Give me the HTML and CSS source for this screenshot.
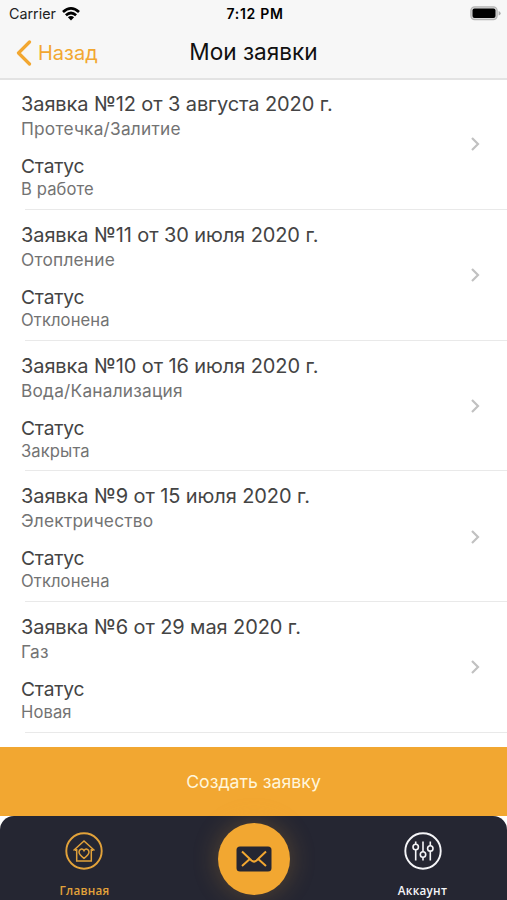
FILE: index.html
```
<!DOCTYPE html>
<html lang="ru">
<head>
<meta charset="utf-8">
<title>Мои заявки</title>
<link rel="stylesheet" href="styles.css">
</head>
<body>
<div class="app">
  <header class="header">
    <div class="status-bar">
      <div class="carrier"><span>Carrier</span>
        <svg class="wifi" width="18" height="14" viewBox="0 0 18 14" fill="none" stroke="#000" stroke-width="2.7"><path d="M1 5.1Q9-2.2 17 5.1"/><path d="M3.9 8.3Q9 3.7 14.1 8.3"/><path d="M9 13.4 5.9 10.2Q9 7.8 12.1 10.2Z" fill="#000" stroke="none"/></svg>
      </div>
      <time class="clock">7:12 PM</time>
      <svg class="battery" width="31" height="15" viewBox="0 0 31 15"><rect x=".9" y=".9" width="26.2" height="12.7" rx="3.8" fill="#d8d8d8" stroke="#b4b4b4" stroke-width="1.3"/><rect x="2.5" y="2.5" width="23" height="9.5" rx="2" fill="#000"/><path d="M28.6 5v4.6q2-.7 2-2.3t-2-2.3" fill="#aaa"/></svg>
    </div>
    <nav class="nav-bar">
      <a class="back"><svg width="16" height="26" viewBox="0 0 16 26" fill="none" stroke="#f2a731" stroke-width="3.2" stroke-linecap="round" stroke-linejoin="round"><path d="M13.5 2 2.5 13l11 11"/></svg><span>Назад</span></a>
      <h1 class="title">Мои заявки</h1>
      <span></span>
    </nav>
  </header>
  <main class="list">
    <article class="row"><div class="info"><h2 class="name">Заявка №12 от 3 августа 2020 г.</h2><p class="detail">Протечка/Залитие</p><h3 class="label">Статус</h3><p class="detail state">В работе</p></div><svg class="chevron" viewBox="0 0 10 16"><path d="m2 2 6 6-6 6"/></svg></article>
    <article class="row"><div class="info"><h2 class="name">Заявка №11 от 30 июля 2020 г.</h2><p class="detail">Отопление</p><h3 class="label">Статус</h3><p class="detail state">Отклонена</p></div><svg class="chevron" viewBox="0 0 10 16"><path d="m2 2 6 6-6 6"/></svg></article>
    <article class="row"><div class="info"><h2 class="name">Заявка №10 от 16 июля 2020 г.</h2><p class="detail">Вода/Канализация</p><h3 class="label">Статус</h3><p class="detail state">Закрыта</p></div><svg class="chevron" viewBox="0 0 10 16"><path d="m2 2 6 6-6 6"/></svg></article>
    <article class="row"><div class="info"><h2 class="name">Заявка №9 от 15 июля 2020 г.</h2><p class="detail">Электричество</p><h3 class="label">Статус</h3><p class="detail state">Отклонена</p></div><svg class="chevron" viewBox="0 0 10 16"><path d="m2 2 6 6-6 6"/></svg></article>
    <article class="row"><div class="info"><h2 class="name">Заявка №6 от 29 мая 2020 г.</h2><p class="detail">Газ</p><h3 class="label">Статус</h3><p class="detail state">Новая</p></div><svg class="chevron" viewBox="0 0 10 16"><path d="m2 2 6 6-6 6"/></svg></article>
  </main>
  <button class="create">Создать заявку</button>
  <footer class="tabs">
    <a class="tab home"><svg width="38" height="38" viewBox="0 0 38 38" fill="none" stroke="currentColor" stroke-width="1.5"><circle cx="19" cy="19" r="17.7" stroke-width="1.9"/><path d="M8.5 18.5 19 9l10.5 9.5M11.7 17v12h14.6V17M10 18.3h2m14 0h2"/><path d="M19 26.3c-3.5-2.5-5-4-5-6.3 0-3 3.5-4 5-1.3 1.5-2.7 5-1.7 5 1.3 0 2.3-1.5 3.8-5 6.3Z"/></svg><span>Главная</span></a>
    <a class="mail"><svg width="36" height="26" viewBox="0 0 36 26" fill="none"><rect x=".5" y=".5" width="35" height="25" rx="3.5" fill="#252632"/><path d="m6 5.5 9.5 9q2.5 2.2 5 0l9.5-9M6 20l7.8-7M30 20l-7.8-7" stroke="#f2a731" stroke-width="2"/></svg></a>
    <a class="tab account"><svg width="38" height="38" viewBox="0 0 38 38" fill="none" stroke="currentColor" stroke-width="1.6"><circle cx="19" cy="19" r="17.7" stroke-width="1.9"/><path d="M11.7 9.5v2.8m0 5.4v10.8M19 9.5v10.3m0 5.4v3.3M26.3 9.5v4.2m0 5.4v9.4"/><circle cx="11.7" cy="15" r="2.7"/><circle cx="19" cy="22.5" r="2.7"/><circle cx="26.3" cy="16.4" r="2.7"/></svg><span>Аккаунт</span></a>
  </footer>
</div>
</body>
</html>
```
FILE: styles.css
```
* { box-sizing: border-box; }
body { margin: 0; background: #fff; font-family: Inter, "Liberation Sans", sans-serif; }
h1, h2, h3, p { margin: 0; font-weight: 400; }
svg { display: block; flex: none; }
.app { width: 507px; height: 900px; display: flex; flex-direction: column; overflow: hidden; }
.header { height: 80px; flex: none; background: #f7f7f7; border-bottom: 2px solid #e3e3e3; }
.status-bar { height: 27px; padding: 0 6px 0 9px; display: grid; grid-template-columns: 1fr auto 1fr; align-items: center; }
.carrier { display: flex; align-items: center; gap: 6px; font-size: 14.3px; color: #222; }
.clock { font-size: 14px; font-weight: 600; letter-spacing: .7px; }
.battery { justify-self: end; }
.nav-bar { height: 49px; padding: 0 16px; display: grid; grid-template-columns: 1fr auto 1fr; align-items: center; }
.back { display: flex; align-items: center; gap: 6px; font-size: 20px; padding-top: 2px; color: #f2a731; }
.title { font-size: 22.6px; color: #111; }
.list { height: 667px; flex: none; margin-top: -1px; }
.row { height: 130.75px; display: flex; align-items: center; justify-content: space-between; padding: 0 27px 0 21px; background: linear-gradient(#e9e9e9, #e9e9e9) 25px 100% / 100% 1px no-repeat; }
.info { height: 100%; padding-top: 12px; }
.name, .label { font-size: 20px; line-height: 26px; letter-spacing: -.1px; color: #444; white-space: nowrap; }
.detail { font-size: 17.3px; line-height: 24px; letter-spacing: .22px; color: #737373; }
.label { margin-top: 12px; font-size: 19.2px; line-height: 26px; letter-spacing: -.15px; }
.state { font-size: 16.6px; line-height: 21px; letter-spacing: .1px; }
.chevron { width: 10px; height: 16px; fill: none; stroke: #c1c1c1; stroke-width: 2.2; }
.create { height: 69px; flex: none; margin-top: 1px; border: 0; padding: 0; background: #f2a731; color: #fff6dc; font: 400 17.7px Inter, "Liberation Sans", sans-serif; }
.tabs { height: 84px; flex: none; display: grid; grid-template-columns: 1fr 1fr 1fr; justify-items: center; background: #252632; border-radius: 14px 14px 0 0; }
.tab { display: flex; flex-direction: column; align-items: center; padding-top: 16px; gap: 12px; font: 600 11.7px/16px "Open Sans", sans-serif; letter-spacing: .25px; white-space: nowrap; }
.home { color: #e2a23a; }
.account { color: #f5f5f8; }
.mail { width: 72px; height: 72px; margin-top: 7px; display: flex; align-items: center; justify-content: center; background: #f2a731; border-radius: 50%; box-shadow: 0 0 26px #f2a73140; }
```
